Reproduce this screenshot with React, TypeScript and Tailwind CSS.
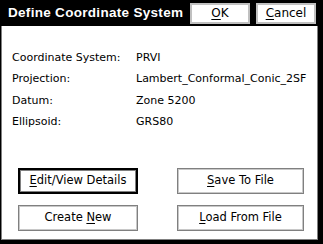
const rows = [
  { label: "Coordinate System:", value: "PRVI" },
  { label: "Projection:", value: "Lambert_Conformal_Conic_2SF" },
  { label: "Datum:", value: "Zone 5200" },
  { label: "Ellipsoid:", value: "GRS80" },
];

const font = "font-['DejaVu_Sans',Tahoma,sans-serif]";

function Key({ k, rest, pre = "" }: { k: string; rest: string; pre?: string }) {
  return (
    <span>
      {pre}
      <span className="underline underline-offset-2">{k}</span>
      {rest}
    </span>
  );
}

function DlgButton({
  children,
  width,
  primary = false,
}: {
  children: React.ReactNode;
  width: string;
  primary?: boolean;
}) {
  return (
    <button
      className={`${width} flex h-[26px] items-center justify-center bg-white text-[11.5px] text-black ${
        primary
          ? "border-2 border-black shadow-[inset_0_0_0_1px_#808080]"
          : "border border-[#808080] shadow-[inset_0_0_0_1px_#c8c8c8]"
      }`}
    >
      {children}
    </button>
  );
}

export default function App() {
  return (
    <div className={`flex h-[244px] w-[323px] flex-col bg-black ${font}`}>
      <div className="flex h-[26px] shrink-0 items-center">
        <span className="whitespace-nowrap pl-[8px] font-['Liberation_Sans',Arial,sans-serif] text-[13.5px] font-bold tracking-[0.3px] text-white">
          Define Coordinate System
        </span>
        <div className="ml-auto mr-[7px] flex gap-[6px]">
          <button className="flex h-[21px] w-[60px] items-center justify-center border-2 border-[#c0c0c0] bg-white text-[12px] text-black">
            <Key k="O" rest="K" />
          </button>
          <button className="flex h-[21px] w-[60px] items-center justify-center border-2 border-[#c0c0c0] bg-white text-[12px] text-black">
            <Key k="C" rest="ancel" />
          </button>
        </div>
      </div>

      <div className="mb-[4px] ml-[1px] mr-[5px] flex-1 border-x border-b border-[#808080] bg-white">
        <div className="pl-[10px] pt-[21px]">
          {rows.map((r) => (
            <div key={r.label} className="flex h-[21.5px] items-center text-[11px] text-black">
              <span className="w-[124px] shrink-0">{r.label}</span>
              <span className="whitespace-nowrap">{r.value}</span>
            </div>
          ))}
        </div>

        <div className="mt-[35px] grid grid-cols-[120px_127px] gap-x-[39px] gap-y-[11px] pl-[16px]">
          <DlgButton width="w-[120px]" primary>
            <Key k="E" rest="dit/View Details" />
          </DlgButton>
          <DlgButton width="w-[127px]">
            <Key k="S" rest="ave To File" />
          </DlgButton>
          <DlgButton width="w-[120px]">
            <Key pre="Create " k="N" rest="ew" />
          </DlgButton>
          <DlgButton width="w-[127px]">
            <Key k="L" rest="oad From File" />
          </DlgButton>
        </div>
      </div>
    </div>
  );
}
